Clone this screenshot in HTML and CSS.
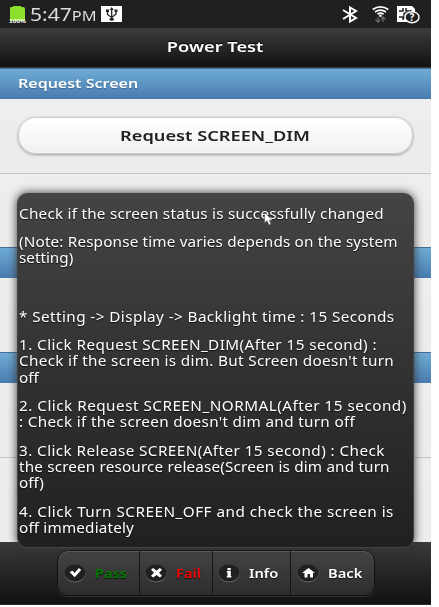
FILE: index.html
```
<!DOCTYPE html>
<html lang="en">
<head>
<meta charset="utf-8">
<title>Power Test</title>
<link rel="stylesheet" href="styles.css">
</head>
<body>
<div class="screen">
  <div class="status">
    <svg class="battery" width="18" height="18" viewBox="0 0 18 18"><path fill="#8be02b" d="M1 2Q1 1 2 1H4V0H12V1H14Q16 1 16 3V15H1Z"/><text class="percent" x="0" y="16.5" textLength="17" lengthAdjust="spacingAndGlyphs">100%</text></svg>
    <span class="time">5:47<span class="pm">PM</span></span>
    <svg class="usb" width="21" height="16" viewBox="0 0 21 16"><path fill="#fff" d="M0 0H21V16H0Z"/><path d="M10.7 2V13M6.5 5V8.5L10.7 11.5L15 8V5" fill="none" stroke="#222" stroke-width="1.3"/><path fill="#222" d="M8.7 4L10.7 1L12.7 4ZM5 3.5H8V6H5ZM13.5 3.5H16.5V6H13.5Z"/><ellipse cx="10.7" cy="13.3" rx="2.3" ry="1.5" fill="#222"/></svg>
    <span class="grow"></span>
    <svg class="bt" width="16" height="17" viewBox="0 0 16 17"><path d="M1 4L14 12L8 15.5V1.5L14 5L1 13" fill="none" stroke="#fff" stroke-width="2"/></svg>
    <svg class="wifi" width="17" height="17" viewBox="0 0 17 17"><path d="M.7 3.5Q8.5-1.7 16.3 3.5M3 6Q8.5 2.2 14 6M5.5 8.2Q8.5 6.2 11.5 8.2" fill="none" stroke="#fff" stroke-width="1.7"/><circle cx="8.4" cy="9.8" r="1.2" fill="#fff"/><path d="M6 11V15M3.5 13.5L6 16L8 14M11 16V12M9 13L11 11L13.5 13.5" fill="none" stroke="#666" stroke-width="1.3"/></svg>
    <svg class="sim" width="23" height="18" viewBox="0 0 23 18"><path fill="#fff" d="M0 0H15L18 3V16H0Z"/><path d="M2 5H6V2M2 11H6V14M9 2V5H15M7 7H13M7 7V13" fill="none" stroke="#222" stroke-width="1.5"/><ellipse cx="15" cy="11.2" rx="7" ry="5.5" fill="#202020" stroke="#fff" stroke-width="1.4"/><text class="question" x="12.5" y="14.8">?</text></svg>
  </div>
  <div class="header"><span class="title">Power Test</span></div>
  <div class="divider"><span class="group">Request Screen</span></div>
  <div class="row first"><div class="button"><span class="button-label">Request SCREEN_DIM</span></div></div>
  <div class="row plain"></div>
  <div class="divider"></div>
  <div class="row middle"></div>
  <div class="divider"></div>
  <div class="row last"></div>
  <div class="row rest"></div>
  <div class="footer">
    <div class="controls">
      <div class="control pass"><svg class="icon" width="22" height="18" viewBox="0 0 22 18"><ellipse cx="11" cy="9" rx="10.5" ry="8.5"/><path d="M5.5 8L8.5 6.8L10.5 9L15 4L17.2 6L10.7 13.2Z"/></svg><span class="label">Pass</span></div>
      <div class="control fail"><svg class="icon" width="22" height="18" viewBox="0 0 22 18"><ellipse cx="11" cy="9" rx="10.5" ry="8.5"/><path d="M8.2 4L11.5 6.7L14.8 4L17 5.8L14 8.8L17 11.8L14.8 13.6L11.5 11L8.2 13.6L6 11.8L9 8.8L6 5.8Z"/></svg><span class="label">Fail</span></div>
      <div class="control info"><svg class="icon" width="22" height="18" viewBox="0 0 22 18"><ellipse cx="11" cy="9" rx="10.5" ry="8.5"/><path d="M9.5 4H12.7V6.3H9.5ZM8.8 7H12.8V12H13.4V13.5H8.8V12H9.5V8.5H8.8Z"/></svg><span class="label">Info</span></div>
      <div class="control back"><svg class="icon" width="22" height="18" viewBox="0 0 22 18"><ellipse cx="11" cy="9" rx="10.5" ry="8.5"/><path d="M11.5 4L18 9H16V13.5H13V10H10.5V13.5H7.5V9H5Z"/></svg><span class="label">Back</span></div>
    </div>
  </div>
  <div class="popup">
    <p><span class="snug">Check if the screen status is successfully changed</span></p>
    <p><span class="tight">(Note: Response time varies depends on the system</span><br>setting)</p>
    <p class="blank">&nbsp;</p>
    <p><span class="loose">* Setting -&gt; Display -&gt; Backlight time : 15 Seconds</span></p>
    <p><span class="loose">1. Click Request SCREEN_DIM(After 15 second) :</span><br><span class="medium">Check if the screen is dim. But Screen doesn't turn</span><br>off</p>
    <p><span class="wide">2. Click Request SCREEN_NORMAL(After 15 second)</span><br><span class="medium">: Check if the screen doesn't dim and turn off</span></p>
    <p><span class="loose">3. Click Release SCREEN(After 15 second) : Check</span><br><span class="tight">the screen resource release(Screen is dim and turn</span><br>off)</p>
    <p><span class="wide">4. Click Turn SCREEN_OFF and check the screen is</span><br><span class="tight">off immediately</span></p>
  </div>
  <svg class="cursor" width="9" height="14" viewBox="0 0 9 14"><path d="M.5.5V11L3 8.7L5 13L7 12L5.3 8.2H8.5Z" fill="#fff" stroke="#444" stroke-width=".5"/></svg>
</div>
</body>
</html>
```
FILE: styles.css
```
* { box-sizing: border-box; }
body { margin: 0; background: #fff; font-family: "Noto Sans", "Open Sans", sans-serif; overflow: hidden; }
.screen { position: relative; width: 431px; height: 605px; background: #eee; overflow: hidden; }
svg { display: block; flex: none; }
.status { display: flex; height: 28px; padding: 6px 12px 0 9px; background: #202020; color: #ddd; }
.percent { font: bold 5px "Liberation Sans", sans-serif; fill: #fff; }
.time { width: 64px; margin-left: 3px; font-size: 18px; line-height: 17px; white-space: nowrap; transform: scaleX(1.17); transform-origin: left; }
.pm { font-size: 14px; }
.usb { margin-left: 7px; }
.grow { flex: 1; }
.bt { margin-right: 14px; }
.wifi { margin-right: 8px; }
.sim { margin-right: -1px; }
.question { font: bold 10px "Noto Sans", sans-serif; fill: #fff; }
.header { height: 40px; display: flex; justify-content: center; background: linear-gradient(#3c3c3c, #111); border-bottom: 1px solid #33383e; color: #fff; font-weight: 600; font-size: 14px; line-height: 37px; text-shadow: 0 -1px 1px #000; }
.title, .button-label { transform: scaleX(1.3); }
.divider { height: 31px; padding-left: 18px; background: linear-gradient(#6facd5, #497bae); border-top: 1px solid #456f95; color: #fff; font-weight: 600; font-size: 13px; line-height: 29px; text-shadow: 0 1px 1px #3e6790; }
.group { display: inline-block; transform: scaleX(1.23); transform-origin: left; }
.row { border-bottom: 1px solid #c5c5c5; background: linear-gradient(#eee, #ececec); }
.first { height: 75px; padding: 18px 18px 0; }
.plain { height: 73px; border: 0; }
.middle { height: 74px; border: 0; }
.last { height: 75px; }
.rest { height: 84px; border: 0; }
.button { height: 37px; display: flex; justify-content: center; border: 1px solid #ccc; border-radius: 18px; background: linear-gradient(#fff, #f1f1f1); box-shadow: 0 1px 3px #999; color: #222; font-weight: 600; font-size: 14px; line-height: 36px; }
.footer { height: 63px; padding: 8px 0 0 57px; background: linear-gradient(#3a3a3a, #111); border-bottom: 1px solid #302b2b; }
.controls { display: flex; width: 318px; height: 46px; border: 1px solid #111; border-radius: 11px; overflow: hidden; background: linear-gradient(#444, #2d2d2d); box-shadow: inset 0 1px #666, 0 1px #333; }
.control { display: flex; align-items: center; border-right: 1px solid #151515; padding-left: 6px; color: #fff; font-size: 13px; font-weight: 600; text-shadow: 0 1px 1px #111; }
.label { margin-left: 9px; transform: scaleX(1.13); transform-origin: left; }
.icon { filter: drop-shadow(0 1px 0 #666); }
.icon ellipse { fill: #202020; }
.icon path { fill: #fff; }
.pass { width: 82px; }
.pass .label { color: #008000; }
.fail { width: 73px; padding-left: 5px; }
.fail .label { color: #f00; }
.info { width: 78px; padding-left: 5px; }
.back { flex: 1; border: 0; }
.popup { position: absolute; left: 17px; top: 193px; width: 397px; height: 355px; padding: 11.5px 0 0 1px; border: 1px solid #444; border-radius: 10px; background: linear-gradient(#444, #202020); box-shadow: 0 0 10px #333; color: #fff; font-size: 14px; line-height: 16.2px; white-space: nowrap; text-shadow: 0 1px 1px #111; }
.popup p { width: 330px; margin: 0 0 12.4px; transform: scaleX(1.09); transform-origin: left; }
.popup .blank { margin-bottom: 13.6px; }
.tight { letter-spacing: .15px; }
.snug { letter-spacing: .22px; }
.medium { letter-spacing: .3px; }
.loose { letter-spacing: .39px; }
.wide { letter-spacing: .45px; }
.cursor { position: absolute; left: 264px; top: 212px; }
```
